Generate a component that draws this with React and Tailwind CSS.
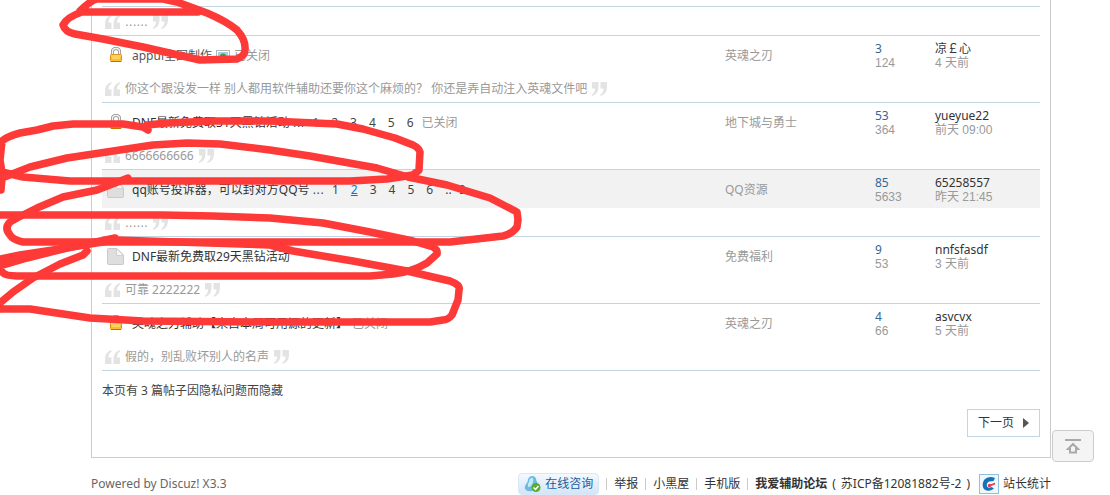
import clsx from "clsx";

const threads = [
  {
    icon: "lock",
    title: "appui全图制作",
    image: true,
    closed: true,
    forum: "英魂之刃",
    replies: 3,
    views: 124,
    author: "凉￡心",
    date: "4 天前",
    quote: "你这个跟没发一样 别人都用软件辅助还要你这个麻烦的？ 你还是弄自动注入英魂文件吧",
  },
  {
    icon: "lock",
    title: "DNF最新免费取31天黑钻活动",
    pages: ["1", "2", "3", "4", "5", "6"],
    closed: true,
    forum: "地下城与勇士",
    replies: 53,
    views: 364,
    author: "yueyue22",
    date: "前天 09:00",
    quote: "6666666666",
  },
  {
    icon: "folder",
    title: "qq账号投诉器，可以封对方QQ号",
    pages: ["1", "2", "3", "4", "5", "6"],
    lastPage: "9",
    activePage: "2",
    hover: true,
    forum: "QQ资源",
    replies: 85,
    views: 5633,
    author: "65258557",
    date: "昨天 21:45",
    quote: "......",
  },
  {
    icon: "folder",
    title: "DNF最新免费取29天黑钻活动",
    forum: "免费福利",
    replies: 9,
    views: 53,
    author: "nnfsfasdf",
    date: "3 天前",
    quote: "可靠 2222222",
  },
  {
    icon: "lock",
    title: "英魂之刃辅助【来自本周可用源的更新】",
    closed: true,
    forum: "英魂之刃",
    replies: 4,
    views: 66,
    author: "asvcvx",
    date: "5 天前",
    quote: "假的，别乱败坏别人的名声",
  },
];

// hand-drawn marker loops over the list
const strokes = [
  "M198 12H82Q67 17 63 25Q65 32 75 34L103 39L143 47L200 60L237 59Q245 56 245 50Q246 40 237 30Q226 21 207 13L177 2L163 -1H97Q90 1 80 11",
  "M148 130L143 127L123 124H73L53 126L37 130L20 133Q8 136 2 141L0 160L2 172L23 177L70 181H350L387 179L413 175L419 170L420 152Q419 148 413 145L395 138L363 129L337 124L270 121H213L167 123L147 125",
  "M1 190L2 178L30 167L67 158L100 153L153 145L187 143L220 144L270 150L310 156L377 168L408 177L447 185L490 198L517 212L518 220L517 227Q512 234 503 236L450 242H23Q13 240 10 235Q4 228 10 222L17 218L37 208L63 197L97 190L128 178",
  "M0 215H163L213 216L270 218L323 223L370 232L413 241L433 247Q438 250 437 254L427 263Q412 272 393 274L370 276H17Q5 276 2 272L0 266L27 258L67 248L115 238",
  "M0 259L20 255L53 250L115 240L270 245L293 251L353 261L407 271L450 281Q461 285 459 290L458 300L452 315Q448 320 443 320L430 322H270L143 321L90 318L30 309H0V303L13 292L33 278L60 264L83 255L87 251",
];

function LockIcon() {
  return (
    <svg className="mx-auto" width="14" height="16" viewBox="0 0 14 16">
      <path d="M3.5 9V4.5Q3.5 1.5 7 1.5T10.5 4.5V9" fill="none" stroke="#8f8f8f" strokeWidth="3" />
      <path d="M3.5 9V4.5Q3.5 1.5 7 1.5T10.5 4.5V9" fill="none" stroke="#f2f2f2" strokeWidth="1.4" />
      <rect x="1.5" y="7.5" width="11" height="7" rx="1" fill="#fdbd2f" stroke="#dd9316" />
      <path d="M2 9h10M3 11h8" stroke="#ffe48a" />
      <path d="M2 14.5h10" stroke="#c86f00" />
    </svg>
  );
}

function FolderIcon() {
  return (
    <svg className="mx-auto" width="17" height="17" viewBox="0 0 17 17">
      <path d="M.5 1.5q0-1 1-1H10l6.500 6.500v8.500q0 1-1 1h-14q-1 0-1-1z" fill="#dedede" stroke="#c9c9c9" />
      <path d="M9.5.5V7.500h7z" fill="#f6f6f6" stroke="#d0d0d0" />
    </svg>
  );
}

function ImageIcon() {
  return (
    <svg className="ml-1 inline-block align-middle" width="14" height="13" viewBox="0 0 14 13">
      <rect x=".5" y=".5" width="13" height="12" fill="#fff" stroke="#b5b5b5" />
      <path d="M2 2h10v9H2z" fill="#9dd0f5" />
      <path d="M2 9h10v2H2z" fill="#b9dba0" />
      <circle cx="7" cy="6.5" r="3" fill="#4d9a1c" />
    </svg>
  );
}

function QuoteMark({ close }) {
  return (
    <svg
      className={clsx("shrink-0", close && "rotate-180")}
      width="16"
      height="14"
      viewBox="0 0 16 14"
      fill="#e3e3e3"
    >
      <path d="M6.500 0v1.500Q3.500 3.500 3.500 7.500H6.500v6.500H0V9Q0 2 6.500 0z" />
      <path d="M15 0v1.500Q12 3.500 12 7.500H15v6.500H8.500V9Q8.500 2 15 0z" />
    </svg>
  );
}

function Quote({ children }) {
  return (
    <div className="flex h-7 items-center gap-1 pt-[2px] pl-[3px] text-[#999]">
      <QuoteMark />
      <span className={clsx(children === "......" && "font-['DejaVu_Sans']")}>{children}</span>
      <QuoteMark close />
    </div>
  );
}

function Pages({ pages, lastPage, activePage }) {
  return (
    <span className="mr-1 text-[#444]">
      <span className="ml-[3px] font-['DejaVu_Sans']">...</span>
      <span className="ml-2 inline-flex gap-3">
        {pages.map((page) => (
          <a key={page} href="#" className={clsx(page === activePage && "text-[#0078d7] underline")}>
            {page}
          </a>
        ))}
        {lastPage && (
          <span>
            .. <a href="#" className="ml-1">{lastPage}</a>
          </span>
        )}
      </span>
    </span>
  );
}

function Thread({ thread }) {
  const { icon, title, pages, closed, image, hover } = thread;
  return (
    <>
      <tr className={clsx("h-[38px]", hover && "bg-[#f2f2f2]")}>
        <td className="pr-[3px]">{icon === "lock" ? <LockIcon /> : <FolderIcon />}</td>
        <td className="pt-[2px] whitespace-nowrap text-[#999]">
          <a href="#" className={image ? "text-[#555]" : "text-[#333]"}>{title}</a>
          {image && <ImageIcon />}
          {pages && <Pages pages={pages} lastPage={thread.lastPage} activePage={thread.activePage} />}
          {closed && <span className="ml-1">已关闭</span>}
        </td>
        <td className="pt-[2px]">
          <a href="#" className="text-[#999]">{thread.forum}</a>
        </td>
        <td className="pt-px leading-[14px]">
          <a href="#" className="block text-[#336699]">{thread.replies}</a>
          <span className="block font-['Liberation_Sans'] text-[#999]">{thread.views}</span>
        </td>
        <td className="pt-px leading-[14px]">
          <a href="#" className="block text-[#333]">{thread.author}</a>
          <span className="block font-['Liberation_Sans','Noto_Sans_CJK_SC',sans-serif] text-[#999]">{thread.date}</span>
        </td>
      </tr>
      <tr>
        <td colSpan={5} className="border-b border-[#c2d5e3]">
          <Quote>{thread.quote}</Quote>
        </td>
      </tr>
    </>
  );
}

function Pipe() {
  return <span className="mx-[7px] h-3 w-px bg-[#ccc]" />;
}

export default function App() {
  return (
    <div className="relative overflow-hidden bg-white pr-[59px] pl-[91px] font-['Noto_Sans','Noto_Sans_CJK_SC',sans-serif] text-xs text-[#444]">
      <main className="border-x border-b border-[#ccc] px-[10px] pt-[6px] pb-5">
        <table className="w-full table-fixed border-separate border-spacing-0">
          <colgroup>
            <col className="w-[30px]" />
            <col />
            <col className="w-[150px]" />
            <col className="w-[60px]" />
            <col className="w-[105px]" />
          </colgroup>
          <tbody>
            <tr>
              <td colSpan={5} className="border-y border-[#c2d5e3]">
                <Quote>......</Quote>
              </td>
            </tr>
            {threads.map((thread) => (
              <Thread key={thread.title} thread={thread} />
            ))}
          </tbody>
        </table>
        <p className="mt-3 leading-4">本页有 3 篇帖子因隐私问题而隐藏</p>
        <div className="mt-[10px] flex justify-end">
          <button className="flex h-7 items-center gap-[9px] border border-[#c2d5e3] px-[10px] text-[#333]">
            下一页
            <svg width="6" height="10" viewBox="0 0 6 10" fill="#555">
              <path d="M0 0l6 5-6 5z" />
            </svg>
          </button>
        </div>
      </main>

      <footer className="mt-[14px] flex h-6 items-center justify-between text-[#666]">
        <p>Powered by Discuz! X3.3</p>
        <div className="flex items-center whitespace-nowrap text-[#333]">
          <a
            href="#"
            className="flex h-[22px] items-center gap-1 rounded-sm border border-[#d9e6f5] bg-linear-to-b from-[#f4f9ff] to-[#d3e5f8] px-[5px] text-[#1d5c98]"
          >
            <svg width="17" height="16" viewBox="0 0 17 16">
              <path d="M8 0Q12 0 12.500 5Q15 8 14.500 11Q12 14 8 15Q3 16 1 13Q0 10 3.500 6Q4 0 8 0z" fill="#69bbe4" />
              <path d="M7 2Q10 1 9 6T4 11Q3 8 5 6Q5 3 7 2z" fill="#c4e9f8" />
              <circle cx="12" cy="11.500" r="4.500" fill="#5aae2b" />
              <path d="M9.500 11.500l2 2 3-3.500" fill="none" stroke="#fff" strokeWidth="1.500" />
            </svg>
            在线咨询
          </a>
          <Pipe />
          <a href="#">举报</a>
          <Pipe />
          <a href="#">小黑屋</a>
          <Pipe />
          <a href="#">手机版</a>
          <Pipe />
          <a href="#" className="font-bold">我爱辅助论坛</a>
          <span className="flex gap-[5px] px-[5px]">
            (<a href="#">苏ICP备12081882号-2</a>)
          </span>
          <a href="#" className="ml-1 flex items-center gap-1">
            <svg width="20" height="20" viewBox="0 0 20 20">
              <rect x=".5" y=".5" width="19" height="19" fill="#eef7fc" stroke="#8fc0dc" />
              <path d="M16 4Q9 1.500 5 6Q2 12 5.500 15.500Q10 18.500 15 14.500L12.500 13Q9 14.500 8 12.500Q7 9 10 7.500L14.500 7z" fill="#1672b8" />
              <path d="M16 9.500L10 12" stroke="#e8364a" strokeWidth="1.600" />
              <circle cx="10.500" cy="11.500" r="1.700" fill="#e8364a" />
            </svg>
            站长统计
          </a>
        </div>
      </footer>

      <button
        aria-label="返回顶部"
        className="absolute top-[430px] right-4 flex h-8 w-[42px] items-center justify-center rounded-sm border border-[#ccc] bg-[#f4f4f4]"
      >
        <svg width="16" height="15" viewBox="0 0 16 15" fill="none" stroke="#aaa" strokeWidth="2">
          <path d="M0 1h16M8 5L3 10H5v3.500h6V10h2z" />
        </svg>
      </button>

      <svg
        className="pointer-events-none absolute top-0 left-0"
        width="1110"
        height="495"
        viewBox="0 0 1110 495"
        fill="none"
        stroke="#fd3a38"
        strokeWidth="7.500"
        strokeLinecap="round"
        strokeLinejoin="round"
      >
        {strokes.map((d) => (
          <path key={d} d={d} />
        ))}
      </svg>
    </div>
  );
}
